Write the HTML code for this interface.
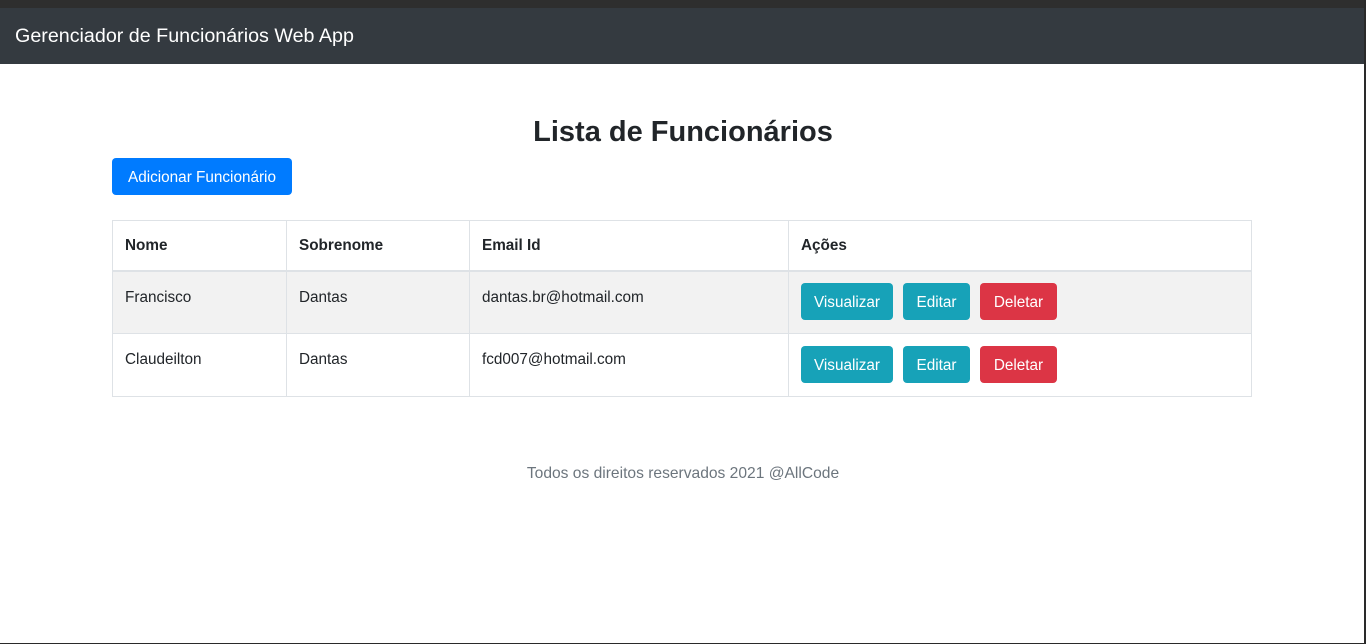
<!DOCTYPE html>
<html><head><meta charset="utf-8"><style>
*{box-sizing:border-box;margin:0;padding:0}
body{width:1366px;height:644px;overflow:hidden;background:#fff;font-family:"Liberation Sans",sans-serif;color:#212529;position:relative}
.top{position:absolute;left:0;top:0;width:1366px;height:8px;background:#2e2e2e}
.nav{position:absolute;left:0;top:8px;width:1366px;height:56px;background:#343a40;color:#fff;font-size:19.7px;padding:17px 0 0 15px}
.rb{position:absolute;right:0;top:0;width:2px;height:644px;background:#2a2a2a}
.bb{position:absolute;left:0;bottom:0;width:1366px;height:1px;background:#2a2a2a}
h2{position:absolute;top:116px;left:0;width:1366px;text-align:center;font-size:29px;font-weight:bold}
.btn{position:absolute;color:#fff;font-size:15.3px;border-radius:4px;text-align:center;line-height:39px;height:37px}
.blue{background:#007bff}.info{background:#17a2b8}.red{background:#dc3545}
table{position:absolute;left:112px;top:220px;width:1140px;border-collapse:collapse;font-size:15.3px}
td,th{border:1px solid #dee2e6;text-align:left;padding:0 12px;vertical-align:top}
th{height:50px;vertical-align:middle;border-bottom:2px solid #dee2e6;padding-top:2px}
td{height:63px;padding-top:17px}
tr.s td{background:#f2f2f2}
.f{position:absolute;top:465px;width:1366px;text-align:center;color:#6c757d;font-size:15.6px}
</style></head><body>
<div class="top"></div>
<div class="nav">Gerenciador de Funcionários Web App</div>
<h2>Lista de Funcionários</h2>
<div class="btn blue" style="left:112px;top:158px;width:180px">Adicionar Funcionário</div>
<table>
<tr><th style="width:174px">Nome</th><th style="width:183px">Sobrenome</th><th style="width:319px">Email Id</th><th>Ações</th></tr>
<tr class="s"><td>Francisco</td><td>Dantas</td><td>dantas.br@hotmail.com</td><td></td></tr>
<tr><td>Claudeilton</td><td>Dantas</td><td>fcd007@hotmail.com</td><td></td></tr>
</table>
<div class="btn info" style="left:801px;top:283px;width:92px">Visualizar</div>
<div class="btn info" style="left:903px;top:283px;width:67px">Editar</div>
<div class="btn red" style="left:980px;top:283px;width:77px">Deletar</div>
<div class="btn info" style="left:801px;top:346px;width:92px">Visualizar</div>
<div class="btn info" style="left:903px;top:346px;width:67px">Editar</div>
<div class="btn red" style="left:980px;top:346px;width:77px">Deletar</div>
<div class="f">Todos os direitos reservados 2021 @AllCode</div>
<div class="rb"></div><div class="bb"></div>
</body></html>
